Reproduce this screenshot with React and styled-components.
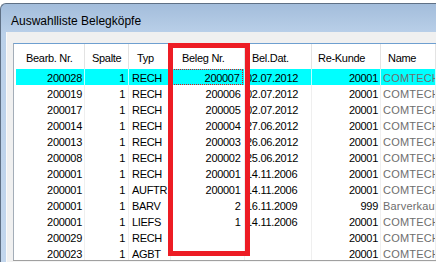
import React from 'react';
import styled, { createGlobalStyle } from 'styled-components';

const GlobalStyle = createGlobalStyle`
  html, body {
    height: 100%;
  }
  body {
    margin: 0;
    background: #fff;
    overflow: hidden;
    font-family: "Liberation Sans", Arial, sans-serif;
  }
  #root {
    height: 100%;
  }
`;

const Window = styled.div`
  margin-top: 3px;
  height: calc(100% - 4px);
  border: 1px solid #5f7085;
  border-right: none;
  border-bottom: none;
  border-radius: 6px 0 0 0;
  background: linear-gradient(#a3bddb 0px, #bad0e9 30px, #c2d6ed 100%);
  display: flex;
  flex-direction: column;
  overflow: hidden;
`;

const TitleBar = styled.div`
  height: 28px;
  flex: 0 0 28px;
  box-sizing: border-box;
  padding: 10px 0 0 10px;
  font-size: 12px;
  line-height: 14px;
  color: #000;
`;

const Client = styled.div`
  flex: 1;
  margin-left: 5px;
  background: #f0f0f0;
  border-left: 1px solid #fafafa;
  padding: 11px 0 0 6px;
  display: flex;
  flex-direction: column;
  min-height: 0;
`;

const GridWrap = styled.div`
  position: relative;
`;

const Grid = styled.div`
  height: 217px;
  box-sizing: border-box;
  background: #fff;
  border-top: 1px solid #6e9fd0;
  border-left: 1px solid #a3adb8;
  padding-left: 2px;
  overflow: hidden;
  font-size: 11px;
  letter-spacing: -0.3px;
  color: #000;
`;

const Row = styled.div`
  display: flex;
  height: ${p => (p.$head ? '25px' : '16px')};
  background: ${p => (p.$selected ? '#00ffff' : '#fff')};
`;

const Cell = styled.div`
  box-sizing: border-box;
  flex: ${p => (p.$w ? `0 0 ${p.$w}px` : '1')};
  min-width: 0;
  border-right: 1px solid ${p => (p.$head ? '#e3e3e3' : p.$selected ? '#bff' : '#efefef')};
  white-space: nowrap;
  overflow: hidden;
  text-align: ${p => p.$align};
  padding: 0 ${p => p.$pr}px 0 ${p => p.$pl}px;
  line-height: 18px;
  color: ${p => (p.$muted ? '#6e6e6e' : '#000')};
  letter-spacing: ${p => (p.$muted ? '0.2px' : '-0.3px')};
`;

const HeadCell = styled(Cell)`
  padding: 4px 0 0 ${p => p.$pl}px;
  line-height: 21px;
  text-align: left;
`;

const Focus = styled.div`
  height: 16px;
  box-sizing: border-box;
  border: 1px dotted #e0101a;
  margin: 0 1px 0 0;
  padding-right: 2.5px;
  line-height: 16px;
`;

const Highlight = styled.div`
  position: absolute;
  left: 155px;
  top: 0;
  width: 82px;
  height: 213px;
  box-sizing: border-box;
  border: 5px solid #ed1c24;
  pointer-events: none;
`;

const BottomBar = styled.div`
  flex: 1;
  border-top: 1px solid #a0a0a0;
  background: #f4f4f4;
`;

const columns = [
  { title: 'Bearb. Nr.', w: 69, align: 'right', hp: 10, pl: 0, pr: 2 },
  { title: 'Spalte', w: 44, align: 'right', hp: 7, pl: 0, pr: 3 },
  { title: 'Typ', w: 42, align: 'left', hp: 8, pl: 3, pr: 0 },
  { title: 'Beleg Nr.', w: 74, align: 'right', hp: 11, pl: 0, pr: 3.5 },
  { title: 'Bel.Dat.', w: 67, align: 'left', hp: 7, pl: 1, pr: 0 },
  { title: 'Re-Kunde', w: 69, align: 'right', hp: 6, pl: 0, pr: 2 },
  { title: 'Name', w: 0, align: 'left', hp: 7, pl: 2, pr: 0, muted: true },
];

const rows = [
  ['200028', '1', 'RECH', '200007', '02.07.2012', '20001', 'COMTECH'],
  ['200019', '1', 'RECH', '200006', '02.07.2012', '20001', 'COMTECH'],
  ['200017', '1', 'RECH', '200005', '02.07.2012', '20001', 'COMTECH'],
  ['200014', '1', 'RECH', '200004', '27.06.2012', '20001', 'COMTECH'],
  ['200013', '1', 'RECH', '200003', '26.06.2012', '20001', 'COMTECH'],
  ['200008', '1', 'RECH', '200002', '25.06.2012', '20001', 'COMTECH'],
  ['200001', '1', 'RECH', '200001', '14.11.2006', '20001', 'COMTECH'],
  ['200001', '1', 'AUFTR', '200001', '14.11.2006', '20001', 'COMTECH'],
  ['200001', '1', 'BARV', '2', '16.11.2009', '999', 'Barverkauf'],
  ['200001', '1', 'LIEFS', '1', '14.11.2006', '20001', 'COMTECH'],
  ['200029', '1', 'RECH', '', '', '20001', 'COMTECH'],
  ['200023', '1', 'AGBT', '', '', '20001', 'COMTECH'],
];

export default function App() {
  return (
    <>
      <GlobalStyle />
      <Window>
        <TitleBar>Auswahlliste Belegköpfe</TitleBar>
        <Client>
          <GridWrap>
            <Grid>
              <Row $head>
                {columns.map(c => (
                  <HeadCell key={c.title} $head $w={c.w} $pl={c.hp}>
                    {c.title}
                  </HeadCell>
                ))}
              </Row>
              {rows.map((r, i) => (
                <Row key={i} $selected={i === 0}>
                  {columns.map((c, j) => (
                    <Cell
                      key={j}
                      $w={c.w}
                      $align={c.align}
                      $pl={c.pl}
                      $pr={i === 0 && j === 3 ? 0 : c.pr}
                      $muted={c.muted}
                      $selected={i === 0}
                    >
                      {i === 0 && j === 3 ? <Focus>{r[j]}</Focus> : r[j]}
                    </Cell>
                  ))}
                </Row>
              ))}
            </Grid>
            <Highlight />
          </GridWrap>
          <BottomBar />
        </Client>
      </Window>
    </>
  );
}
